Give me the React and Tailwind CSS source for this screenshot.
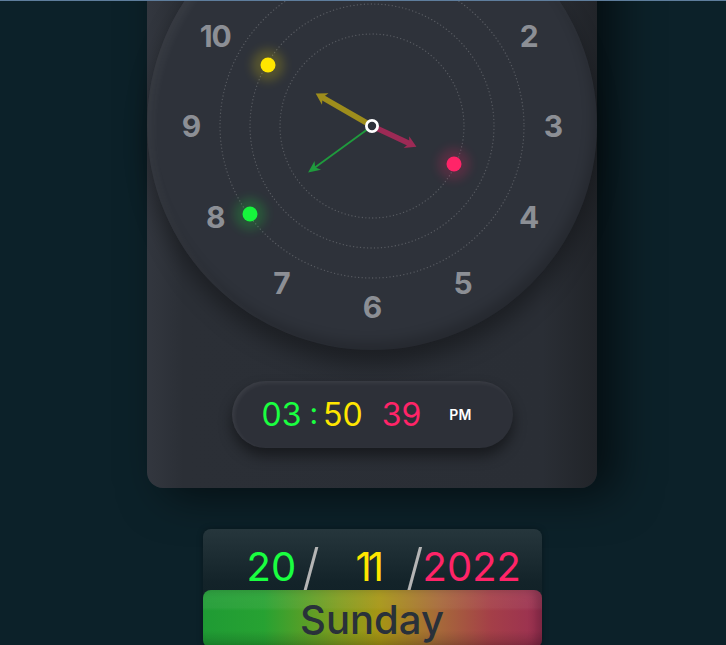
import React from "react";

const CX = 225;
const CY = 226;

function Hand({ angle, length, width, color, head }) {
  const L = length;
  const hw = head.w / 2;
  const hl = head.l;
  return (
    <g transform={`rotate(${angle} ${CX} ${CY})`}>
      <line x1={CX} y1={CY} x2={CX} y2={CY - L + hl * 0.6} stroke={color} strokeWidth={width} />
      <polygon
        points={`${CX},${CY - L} ${CX - hw},${CY - L + hl} ${CX},${CY - L + hl * 0.72} ${CX + hw},${CY - L + hl}`}
        fill={color}
      />
    </g>
  );
}

function Dot({ x, y, color }) {
  return (
    <g>
      <circle cx={x} cy={y} r={16} fill={color} opacity="0.18" filter="url(#glow)" />
      <circle cx={x} cy={y} r={7.5} fill={color} />
    </g>
  );
}

function Dial() {
  const nums = [];
  for (let h = 2; h <= 10; h++) {
    const a = (h * 30 * Math.PI) / 180;
    const x = CX + 181 * Math.sin(a);
    const y = CY - 181 * Math.cos(a);
    nums.push(
      <text
        key={h}
        x={x}
        y={y}
        textAnchor="middle"
        dominantBaseline="central"
        fill="#8c8f95"
        fontSize="30"
        fontWeight="700"
        letterSpacing="-1"
        fontFamily="Inter, 'Noto Sans', sans-serif"
      >
        {h}
      </text>
    );
  }
  return (
    <svg width="450" height="450" viewBox="0 0 450 450" className="block">
      <defs>
        <filter id="glow" x="-100%" y="-100%" width="300%" height="300%">
          <feGaussianBlur stdDeviation="5" />
        </filter>
      </defs>
      {[152, 122, 92].map((r) => (
        <circle
          key={r}
          cx={CX}
          cy={CY}
          r={r}
          fill="none"
          stroke="rgba(255,255,255,0.2)"
          strokeWidth="1.3"
          strokeDasharray="0.1 3.4"
          strokeLinecap="round"
        />
      ))}
      {nums}
      <Dot x={CX - 104} y={CY - 61} color="#ffe600" />
      <Dot x={CX + 82} y={CY + 38} color="#ff2468" />
      <Dot x={CX - 122} y={CY + 88} color="#16f53c" />
      <Hand angle={300} length={65} width={5.5} color="#9e8d1c" head={{ w: 13, l: 11 }} />
      <Hand angle={115} length={49} width={5.5} color="#9c2a55" head={{ w: 13, l: 11 }} />
      <Hand angle={234} length={79} width={1.8} color="#1f9b3d" head={{ w: 11, l: 12 }} />
      <circle cx={CX} cy={CY} r={5.6} fill="#2e323a" stroke="#ffffff" strokeWidth="2.8" />
    </svg>
  );
}

export default function App() {
  return (
    <div
      className="min-h-[645px] w-full overflow-hidden border-t border-[#5e7d9c] bg-[#0c2129] flex flex-col items-center pl-[18px]"
      style={{ fontFamily: "Inter, 'Noto Sans', sans-serif" }}
    >
      <div className="mt-[-101px] w-[450px] h-[588px] rounded-[16px] bg-[linear-gradient(to_right,#33373f,#2b2f36_8%,#2a2e35_88%,#212429)] shadow-[18px_6px_45px_rgba(0,0,0,0.6)] flex flex-col items-center">
        <div className="w-[450px] h-[450px] rounded-full bg-[#2e323a] shadow-[0_14px_22px_rgba(0,0,0,0.35),inset_5px_5px_10px_rgba(255,255,255,0.05),inset_-4px_-8px_12px_rgba(0,0,0,0.18)]">
          <Dial />
        </div>
        <div className="mt-[31px] w-[281px] h-[67px] rounded-full bg-[#2d3038] shadow-[0_8px_14px_rgba(0,0,0,0.45),inset_2px_2px_4px_rgba(255,255,255,0.07)] flex items-center pl-[30px]">
          <span className="text-[32px] leading-none text-[#1aff40]">03</span>
          <span className="ml-[8px] text-[30px] leading-none text-[#1aff40] relative top-[-2px]">:</span>
          <span className="ml-[5px] text-[32px] leading-none text-[#ffe600]">50</span>
          <span className="ml-[19px] text-[32px] leading-none text-[#ff2468]">39</span>
          <span className="ml-[28px] text-[14px] leading-none font-semibold text-white">PM</span>
        </div>
      </div>

      <div className="mt-[41px] w-[339px] rounded-[8px] bg-[linear-gradient(to_bottom,#26363c,#132329_45%,#0c1c21)] shadow-[0_0_6px_rgba(0,0,0,0.3)]">
        <div className="h-[61px] flex items-end pl-[44px] pb-[3px]">
          <span className="text-[40px] leading-none text-[#1aff40]">20</span>
          <span className="ml-[6px] text-[50px] leading-none font-light text-[#b5b5b5] relative top-[5px]">/</span>
          <span className="ml-[36px] text-[40px] leading-none tracking-[-4px] text-[#ffe600]">11</span>
          <span className="ml-[26px] text-[50px] leading-none font-light text-[#b5b5b5] relative top-[5px]">/</span>
          <span className="ml-[-1px] text-[40px] leading-none text-[#ff2468]">2022</span>
        </div>
        <div className="relative h-[58px] rounded-[8px] bg-[linear-gradient(to_bottom,rgba(255,255,255,0.07)_0%,rgba(255,255,255,0.05)_30%,rgba(255,255,255,0)_36%,rgba(0,0,0,0)_70%,rgba(0,0,0,0.2)_100%),linear-gradient(to_right,#1f9b34,#27a232_18%,#7f9c1e_40%,#a69514_52%,#a6683a_70%,#a43f48_85%,#9a2f52)] shadow-[inset_-6px_0_8px_rgba(0,0,0,0.2)] flex items-center justify-center">
          <span className="text-[40px] font-medium leading-none text-[#29313a] relative top-[1px]">Sunday</span>
        </div>
      </div>
    </div>
  );
}
